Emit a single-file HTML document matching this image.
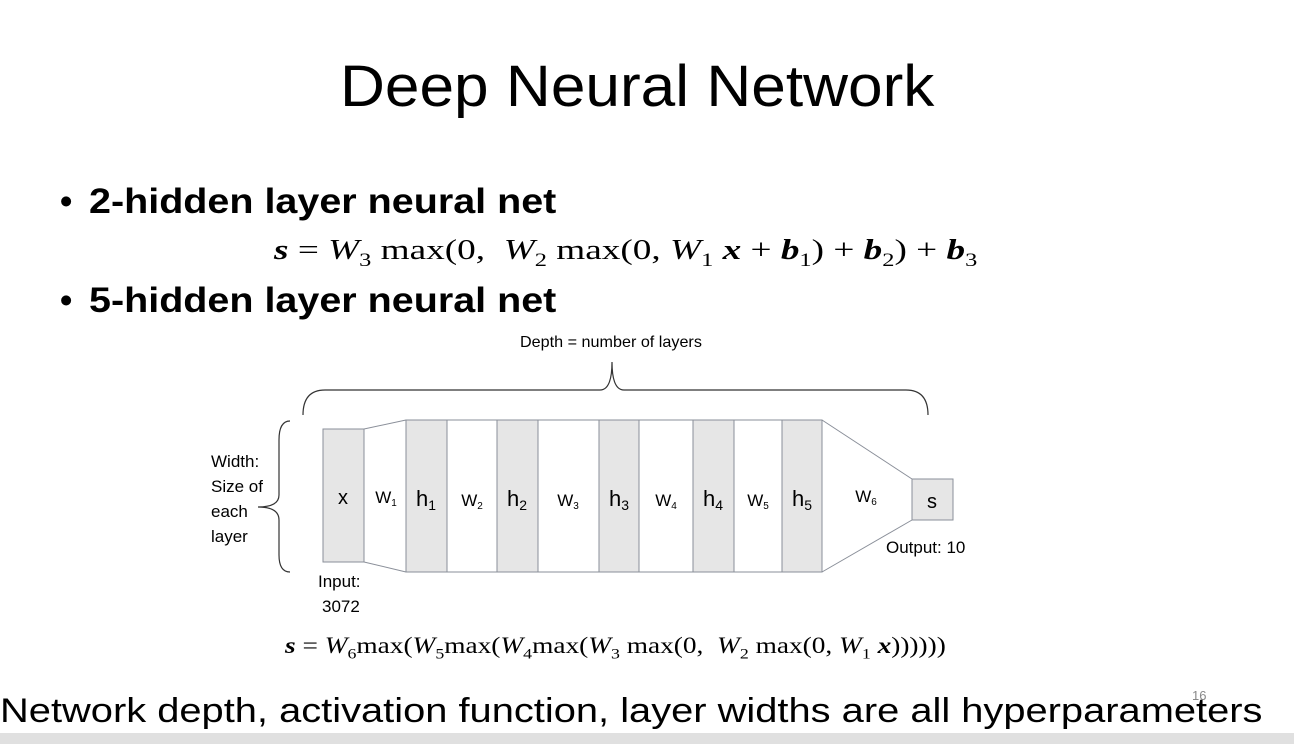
<!DOCTYPE html>
<html><head><style>
body{margin:0;width:1294px;height:744px;background:#fff;position:relative;overflow:hidden;font-family:"Liberation Sans",sans-serif;color:#000}
.a{position:absolute;white-space:nowrap;transform-origin:0 0}
.m{font-family:"Liberation Serif",serif}
</style></head><body>
<div class="a" style="left:340px;top:53px;font-size:58px;transform:scaleX(1.072)">Deep Neural Network</div>
<div class="a" style="left:60px;top:182px;font-size:35px;font-weight:bold">•</div>
<div class="a" style="left:89px;top:182px;font-size:35px;font-weight:bold;transform:scaleX(1.128)">2-hidden layer neural net</div>
<div class="a m" style="left:274px;top:234px;font-size:29px;transform:scaleX(1.284)"><b><i>s</i></b> = <i>W</i><sub style="font-size:19px">3</sub> max(0,&nbsp; <i>W</i><sub style="font-size:19px">2</sub> max(0, <i>W</i><sub style="font-size:19px">1</sub> <b><i>x</i></b> + <b><i>b</i></b><sub style="font-size:19px">1</sub>) + <b><i>b</i></b><sub style="font-size:19px">2</sub>) + <b><i>b</i></b><sub style="font-size:19px">3</sub></div>
<div class="a" style="left:60px;top:281px;font-size:35px;font-weight:bold">•</div>
<div class="a" style="left:89px;top:281px;font-size:35px;font-weight:bold;transform:scaleX(1.128)">5-hidden layer neural net</div>
<div class="a" style="left:520px;top:334px;font-size:16px;transform:scaleX(1.01)">Depth = number of layers</div>
<svg class="a" style="left:0;top:0" width="1294" height="744">
<g fill="none" stroke="#333" stroke-width="1.2">
<path d="M303,415 Q303,390 325,390 L600,390 Q612,390 612,362 Q612,390 624,390 L906,390 Q928,390 928,415"/>
<path d="M290,421 Q279,421 279,440 L279,495 Q279,507 258,507 Q279,507 279,520 L279,555 Q279,572 290,572"/>
</g>
<g stroke="#8a8f99" stroke-width="1" fill="none">
<path d="M364,429 L406,420 M364,562 L406,572 M822,420 L912,479 M822,572 L912,520"/>
<rect x="406" y="420" width="416" height="152"/>
</g>
<g fill="#e6e6e6" stroke="#8a8f99" stroke-width="1">
<rect x="323" y="429" width="41" height="133"/>
<rect x="406" y="420" width="41" height="152"/>
<rect x="497" y="420" width="41" height="152"/>
<rect x="599" y="420" width="40" height="152"/>
<rect x="693" y="420" width="41" height="152"/>
<rect x="782" y="420" width="40" height="152"/>
<rect x="912" y="479" width="41" height="41"/>
</g>
<g font-family="Liberation Sans" font-size="20" text-anchor="middle">
<text x="343" y="504">x</text>
<text x="932" y="508">s</text>
<g font-size="22"><text x="426" y="506">h<tspan font-size="14" dy="4">1</tspan></text>
<text x="517" y="506">h<tspan font-size="14" dy="4">2</tspan></text>
<text x="619" y="506">h<tspan font-size="14" dy="4">3</tspan></text>
<text x="713" y="506">h<tspan font-size="14" dy="4">4</tspan></text>
<text x="802" y="506">h<tspan font-size="14" dy="4">5</tspan></text></g>
<g font-size="17"><text x="386" y="503">W<tspan font-size="10" dy="3">1</tspan></text>
<text x="472" y="506">W<tspan font-size="10" dy="3">2</tspan></text>
<text x="568" y="506">W<tspan font-size="10" dy="3">3</tspan></text>
<text x="666" y="506">W<tspan font-size="10" dy="3">4</tspan></text>
<text x="758" y="506">W<tspan font-size="10" dy="3">5</tspan></text>
<text x="866" y="502">W<tspan font-size="10" dy="3">6</tspan></text></g>
</g>
<g font-family="Liberation Sans" font-size="17">
<text x="211" y="467">Width:</text><text x="211" y="492">Size of</text><text x="211" y="517">each</text><text x="211" y="542">layer</text>
<text x="318" y="587">Input:</text><text x="322" y="612">3072</text>
<text x="886" y="553">Output: 10</text>
</g>
</svg>
<div class="a m" style="left:285px;top:633px;font-size:23px;transform:scaleX(1.188)"><b><i>s</i></b> = <i>W</i><sub style="font-size:15px">6</sub>max(<i>W</i><sub style="font-size:15px">5</sub>max(<i>W</i><sub style="font-size:15px">4</sub>max(<i>W</i><sub style="font-size:15px">3</sub> max(0,&nbsp; <i>W</i><sub style="font-size:15px">2</sub> max(0, <i>W</i><sub style="font-size:15px">1</sub> <b><i>x</i></b>))))))</div>
<div class="a" style="left:1192px;top:688px;font-size:13px;color:#888">16</div>
<div class="a" style="left:0;top:692px;font-size:34px;transform:scaleX(1.172)">Network depth, activation function, layer widths are all hyperparameters</div>
<div class="a" style="left:0;top:733px;width:1294px;height:11px;background:#e0e0e0"></div>
</body></html>
